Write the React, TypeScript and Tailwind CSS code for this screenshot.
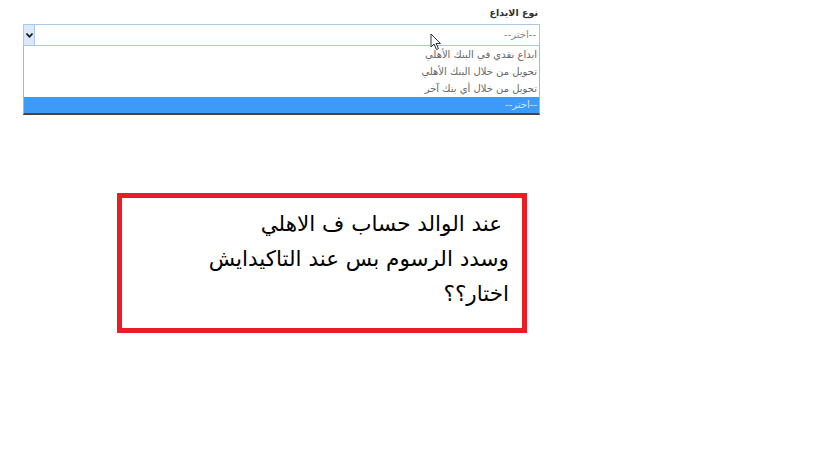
function Cursor() {
  return (
    <svg width="12" height="18" viewBox="0 0 12 18" className="absolute left-[430px] top-[33px]">
      <path d="M1 1 L1 14 L4 11 L6.5 16.5 L8.5 15.5 L6 10.5 L10.5 10.5 Z" fill="#ffffff" stroke="#333" strokeWidth="1" strokeLinejoin="round" />
    </svg>
  )
}

const options = ['ابداع نقدي في البنك الأهلي', 'تحويل من خلال البنك الأهلي', 'تحويل من خلال أي بنك آخر']

export default function App() {
  return (
    <div className="relative w-[819px] h-[460px] bg-white overflow-hidden" style={{ fontFamily: '"DejaVu Sans", "Noto Sans", sans-serif' }}>
      <div className="ml-[23px] w-[517px] pt-[4px]">
        <div dir="rtl" className="h-[20px] pr-[2px] text-[9.5px] font-bold text-[#333] leading-[18px]">نوع الايداع</div>
        <div className="flex h-[22px] border border-[#a9c9ea] bg-white">
          <div className="w-[11px] bg-[#dbe8f7] border-r border-[#a9c9ea] flex items-center justify-center">
            <svg width="7" height="5" viewBox="0 0 7 5">
              <path d="M0.5 0.5 L3.5 3.8 L6.5 0.5" fill="none" stroke="#111" strokeWidth="1.6" />
            </svg>
          </div>
          <div dir="rtl" className="flex-1 pr-[3px] text-[10px] text-[#888] leading-[20px]">--اختر--</div>
        </div>
        <div className="border-x border-b-2 border-x-[#b5b5b5] border-b-[#444] bg-white">
          {options.map((o) => (
            <div key={o} dir="rtl" className="h-[17px] pr-[2px] text-[10px] text-[#666] leading-[17px]">{o}</div>
          ))}
          <div dir="rtl" className="h-[16px] pr-[2px] text-[10px] text-[#d6e6fb] leading-[16px] bg-[#3e9af7]">--اختر--</div>
        </div>
      </div>
      <Cursor />
      <div className="ml-[117px] mt-[78px] w-[410px] h-[140px] border-[5px] border-[#ed1c24]">
        <div dir="rtl" className="pt-[8px] pr-[13px] text-[21.5px] leading-[35px] text-black" style={{ fontFamily: '"DejaVu Sans", sans-serif' }}>
          <div>&nbsp;عند الوالد حساب ف الاهلي</div>
          <div>وسدد الرسوم بس عند التاكيدايش</div>
          <div>اختار؟؟</div>
        </div>
      </div>
    </div>
  )
}
